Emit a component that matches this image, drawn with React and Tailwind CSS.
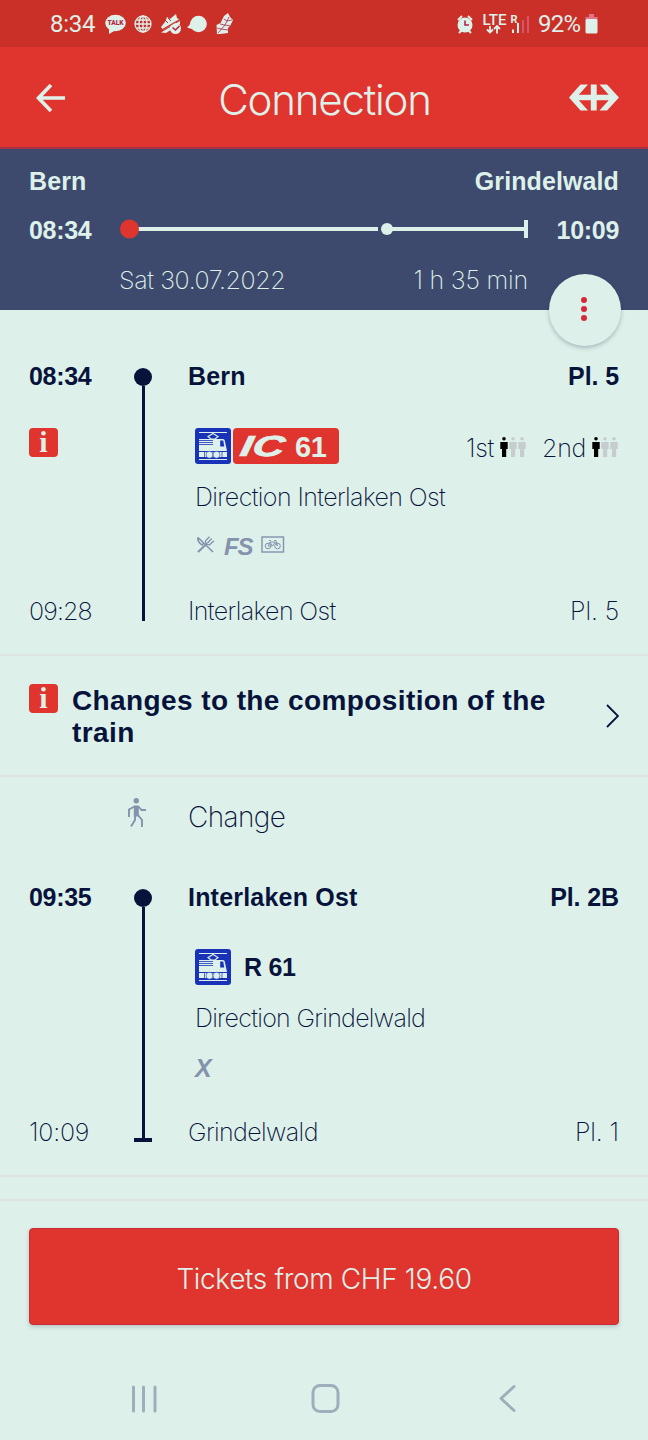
import clsx from "clsx";

const light = "font-['Inter','Liberation_Sans',sans-serif] font-[250]";
const regular = "font-['Inter','Liberation_Sans',sans-serif] font-light";
const bold = "font-['Liberation_Sans',Arial,sans-serif] font-bold";

function StatusBar() {
  return (
    <div className="h-[47px] bg-[#ca3028] text-[#ddf1ea] flex items-center justify-between pl-[50px] pr-[50px] font-['Roboto',sans-serif]">
      <div className="flex items-center">
        <span className="text-[24px] leading-none w-[55px] tracking-[-0.3px]">8:34</span>
        <svg width="21" height="20" viewBox="0 0 21 20" className="fill-current">
          <ellipse cx="10.5" cy="9" rx="10.3" ry="8.3" />
          <path d="M4 14v6l7-4z" />
          <text x="10.5" y="11.4" textAnchor="middle" fontSize="6.6" fontWeight="900" fill="#b32545">TALK</text>
        </svg>
        <svg width="18" height="18" viewBox="0 0 18 18" className="ml-2 fill-none stroke-current" strokeWidth="1.3">
          <circle cx="9" cy="9" r="8" />
          <ellipse cx="9" cy="9" rx="4" ry="8" />
          <path d="M9 1v16M1 9h16M2.5 5h13M2.5 13h13" />
        </svg>
        <svg width="22" height="20" viewBox="0 0 22 20" className="ml-2 fill-current">
          <path d="M1 13 5 8l2-5 3 2 6-5 1 4 3 2L3 16z" />
          <path d="M1 18.500 20 7v3L6 19z" />
          <circle cx="15.500" cy="14.500" r="5.500" />
          <path d="m12.500 13.500 3 2.500 4-4" fill="none" stroke="#b32545" strokeWidth="1.600" />
          <path d="M0 17 20 5.500" stroke="#ca3028" strokeWidth="1.300" />
          <path d="m5 6 3 3M8 4l3 3" stroke="#ca3028" strokeWidth="1" />
        </svg>
        <svg width="20" height="18" viewBox="0 0 20 18" className="ml-[5px] fill-current">
          <circle cx="11.5" cy="9" r="8.3" />
          <path d="M4 6Q3 11 0 12q2 2 8 2z" />
        </svg>
        <svg width="18" height="22" viewBox="0 0 18 22" className="ml-[9px] fill-current">
          <path d="m1 21-.500-9 4-2L8 3l4-3 2 4 3 3-3 6-2 2v5l-8 1z" />
          <path d="M2 20 9 12l4-8M9 12l-5-1M9 12l5 1M11 8l5-1M11 8 8 6M5 16l7 1M5 16l-4-1" fill="none" stroke="#b32545" strokeWidth="0.800" />
        </svg>
      </div>
      <div className="flex items-center">
        <svg width="18" height="20" viewBox="0 0 18 20" className="fill-current">
          <circle cx="9" cy="11" r="7.5" />
          <path d="m2 6 4-4M16 6l-4-4M3 19l3-3M15 19l-3-3" stroke="currentColor" strokeWidth="2" />
          <path d="M9 6.5V11h4" fill="none" stroke="#b32545" strokeWidth="1.6" />
        </svg>
        <svg width="48" height="22" viewBox="0 0 48 22" className="ml-2 fill-current overflow-visible">
          <text x="0.5" y="12" fontSize="15" fontWeight="500" textLength="24" lengthAdjust="spacingAndGlyphs">LTE</text>
          <path d="M8 13v6M5 16.5l3 3 3-3M15 20.500v-7M12 16l3-3 3 3" fill="none" stroke="currentColor" strokeWidth="1.8" />
          <text x="28.500" y="9.500" fontSize="11" fontWeight="700">R</text>
          <path d="M31 16.500v3.500M36 10v10" stroke="currentColor" strokeWidth="2" />
          <path d="M41 7v13M46 3v17" stroke="#d95468" strokeWidth="2" />
        </svg>
        <span className="ml-[8px] text-[24px] leading-none w-[47px] tracking-[-0.8px]">92%</span>
        <svg width="13" height="20" viewBox="0 0 13 20" className="fill-current">
          <path d="M4 0h5v3h3.500v3H.5V3H4z" fill="#e0748a" />
          <rect x="0.5" y="5" width="12" height="14.500" rx="1.500" />
        </svg>
      </div>
    </div>
  );
}

function Header() {
  return (
    <header className="h-[102px] bg-[#e0352e] border-b-2 border-[#a83243] text-[#ddf1ea] flex items-center justify-between pl-[36px] pr-[29px]">
      <svg width="30" height="28" viewBox="0 0 30 28" className="fill-none stroke-current mt-[2px]" strokeWidth="3.600">
        <path d="M15 1 2.500 14 15 27M2.500 14H29" />
      </svg>
      <h1 className={clsx(regular, "text-[42px] leading-none tracking-[-1.2px] mt-[6px] ml-[14px]")}>Connection</h1>
      <svg width="50" height="27" viewBox="0 0 50 27" className="fill-current mt-[1px]">
        <path d="M0 13.500 11.500.5H19L9.800 10.800H21.800V.5h5.900v10.300h12L30.500.5H38L50 13.500 38 26.500h-7.500l9.200-10.300h-12v10.300h-5.900V16.200H9.800L19 26.500h-7.500z" />
      </svg>
    </header>
  );
}

function Summary() {
  return (
    <section className="h-[161px] bg-[#3e4a6d] text-[#ddf1ea] px-[29px] pt-[18px] relative">
      <div className={clsx(bold, "flex justify-between text-[25px] leading-[28px] tracking-[0.1px]")}>
        <span>Bern</span>
        <span>Grindelwald</span>
      </div>
      <div className={clsx(bold, "flex items-center justify-between text-[25px] leading-[28px] tracking-[-0.3px] mt-[21px]")}>
        <span>08:34</span>
        <svg width="408" height="20" viewBox="0 0 408 20" className="-mt-[2px]">
          <path d="M10 10h248M267 10h139" stroke="#ddf1ea" strokeWidth="4" />
          <path d="M406 1v18" stroke="#ddf1ea" strokeWidth="4" />
          <circle cx="9.500" cy="10" r="9.500" fill="#e0352e" />
          <circle cx="267" cy="10" r="6" fill="#ddf1ea" />
        </svg>
        <span>10:09</span>
      </div>
      <div className={clsx(light, "flex justify-between text-[25px] leading-[28px] mt-[22px] pl-[90px] pr-[91px]")}>
        <span className="tracking-[-0.4px]">Sat 30.07.2022</span>
        <span className="tracking-[-0.2px]">1 h 35 min</span>
      </div>
      <button className="absolute right-[27px] top-[125px] size-[72px] rounded-full bg-[#ddf1ea] shadow-[0_2px_4px_rgba(20,20,60,0.25)] flex flex-col items-center justify-center gap-[3px] pr-[2px] pb-[2px]">
        <i className="size-[6px] rounded-full bg-[#d5293a]" />
        <i className="size-[6px] rounded-full bg-[#d5293a]" />
        <i className="size-[6px] rounded-full bg-[#d5293a]" />
      </button>
    </section>
  );
}

function InfoIcon() {
  return (
    <svg width="29" height="29" viewBox="0 0 29 29" className="shrink-0 overflow-visible font-['Liberation_Serif',serif] font-bold">
      <rect width="29" height="29" rx="4" fill="#e0352e" />
      <text x="14.500" y="24" textAnchor="middle" fontSize="30" letterSpacing="0" fill="#ddf1ea">i</text>
    </svg>
  );
}

function TrainIcon() {
  return (
    <svg width="36" height="36" viewBox="0 0 36 36" className="shrink-0">
      <rect width="36" height="36" rx="3" fill="#1832b8" />
      <g fill="#ddf1ea">
        <path d="M4 4h28v1H4z" />
        <path d="M4 11h24q1.500 0 1.800 1.500L32 23H4z" />
        <path d="M4 24h28v5H4zM4 31h28v1H4z" />
      </g>
      <path d="m18 5.500 5 3-3 2.500h-4l-3-2.500z" fill="none" stroke="#ddf1ea" strokeWidth="1.200" />
      <path d="M4 12.500h14M4 14.500h14M4 16.500h14" stroke="#1832b8" strokeWidth="0.800" />
      <path d="M25.200 12.500h3l1.100 6h-4.100z" fill="#1832b8" />
      <g fill="#ddf1ea" stroke="#1832b8" strokeWidth="0.600">
        <circle cx="14.500" cy="26.700" r="3.500" />
        <circle cx="21.500" cy="26.700" r="3.500" />
      </g>
      <path d="M9.500 24V29M27 24V29" stroke="#1832b8" strokeWidth="0.700" />
    </svg>
  );
}

function Occupancy() {
  return (
    <svg width="27" height="20" viewBox="0 0 27 20" className="-mt-px">
      {["#000000", "#c5cdce", "#c5cdce"].map((color, i) => (
        <g key={i} fill={color} transform={`translate(${i * 9} 0)`}>
          <circle cx="4" cy="1.800" r="1.800" />
          <path d="M.3 5h7.400v7H6.200v8H2v-8H.3z" />
        </g>
      ))}
    </svg>
  );
}

function CutleryIcon() {
  return (
    <svg width="18" height="17" viewBox="0 0 18 17" fill="none" stroke="#8592ad" strokeWidth="1.300">
      <path d="M1 1.500 16 16M1 1.500Q0 5 5 9l2-2" strokeWidth="1.600" />
      <path d="M1 16 10 7.500" strokeWidth="2" />
      <path d="m12.500.8-4 4q0 4 4 4l4.500-4M14.800 2.500 10.500 7" />
    </svg>
  );
}

function BikeIcon() {
  return (
    <svg width="24" height="17" viewBox="0 0 24 17" fill="none" stroke="#8592ad" strokeWidth="1">
      <rect x="1" y="1" width="21.500" height="15" strokeWidth="1.400" />
      <circle cx="7" cy="10" r="2.800" />
      <circle cx="16.500" cy="10" r="2.800" />
      <path d="m7 10 2-4h5l2.500 4M9 6l2.500 4L14 6M7 10h4.500M8 4.500h2M13 4.500h2L16.500 10" strokeWidth="0.900" />
    </svg>
  );
}

function WalkIcon() {
  return (
    <svg width="20" height="30" viewBox="0 0 20 30" fill="none" stroke="#8592ad" strokeWidth="1.900">
      <circle cx="9.300" cy="2.700" r="2.700" fill="#8592ad" stroke="none" />
      <path d="M6.800 7.500h5v11h-5z" fill="#8592ad" stroke="none" />
      <path d="M7.500 8.500 2 11.500V19M11.500 8.500l3 3.500H19M8 17v5l-4 6.500M11 17l4 5v7" />
    </svg>
  );
}

function Leg({ from, to, last, children, info }) {
  return (
    <div className="flex h-[264px] pl-[29px] pr-[29px]">
      <div className="w-[105px] flex flex-col text-[25px] leading-[28px]">
        <span className={clsx(bold, "tracking-[-0.3px]")}>{from.time}</span>
        {info && <div className="mt-[38px]"><InfoIcon /></div>}
        <span className={clsx(light, "mt-auto mb-px", last ? "tracking-[-0.2px]" : "tracking-[-0.9px]")}>{to.time}</span>
      </div>
      <div className="w-[18px] pt-[6px] pb-[5px] flex flex-col items-center">
        <div className="size-[18px] rounded-full bg-[#08133c]" />
        <div className="w-[3px] flex-1 bg-[#08133c]" />
        {last && <div className="h-[4px] w-[18px] bg-[#08133c]" />}
      </div>
      <div className="flex-1 pl-[36px] flex flex-col text-[25px] leading-[28px]">
        <div className={clsx(bold, "flex justify-between tracking-[0.2px]")}>
          <span>{from.name}</span>
          <span className="tracking-[-0.1px]">{from.platform}</span>
        </div>
        <div className="pl-[7px] mt-[38px]">{children}</div>
        <div className={clsx(light, "mt-auto mb-px flex justify-between tracking-[-0.6px]")}>
          <span>{to.name}</span>
          <span className="tracking-[-0.1px]">{to.platform}</span>
        </div>
      </div>
    </div>
  );
}

export default function App() {
  return (
    <div className="w-[648px] h-[1440px] overflow-hidden bg-[#ddf1ea] text-[#08133c]">
      <StatusBar />
      <Header />
      <Summary />

      <div className="h-[346px] pt-[52px] border-b-2 border-[#dde3e1]">
        <Leg
          info
          from={{ time: "08:34", name: "Bern", platform: "Pl. 5" }}
          to={{ time: "09:28", name: "Interlaken Ost", platform: "Pl. 5" }}
        >
          <div className="flex items-center">
            <TrainIcon />
            <svg width="106" height="36" viewBox="0 0 106 36" fill="#ddf1ea" className={clsx(bold, "ml-[2px] overflow-visible")}>
              <rect width="106" height="36" rx="4" fill="#e0352e" />
              <text x="11" y="28" fontSize="29" fontStyle="italic" letterSpacing="0" textLength="44" lengthAdjust="spacingAndGlyphs" transform="skewX(-10)" stroke="#ddf1ea" strokeWidth="0.700">IC</text>
              <text x="62" y="29" fontSize="29" letterSpacing="-0.500">61</text>
            </svg>
            <div className={clsx(light, "ml-auto mt-[3px] flex items-center tracking-[-0.3px]")}>
              <span className="mr-[6px]">1st</span>
              <Occupancy />
              <span className="ml-[15px] mr-[6px]">2nd</span>
              <Occupancy />
            </div>
          </div>
          <p className={clsx(light, "mt-[19px] tracking-[-0.6px]")}>Direction Interlaken Ost</p>
          <div className="mt-[21px] flex items-center h-[28px]">
            <div className="-mt-[3px] ml-[2px]"><CutleryIcon /></div>
            <span className={clsx(bold, "ml-[9px] mt-px w-[37px] text-[24px] italic tracking-[-1.2px] text-[#8592ad]")}>FS</span>
            <div className="-mt-[3px]"><BikeIcon /></div>
          </div>
        </Leg>
      </div>

      <div className="h-[121px] border-b-2 border-[#dde3e1] flex pl-[29px] pr-[29px] pt-[29px]">
        <div className="-mt-px"><InfoIcon /></div>
        <p className={clsx(bold, "ml-[14px] w-[500px] text-[28px] leading-[32px] tracking-[0.4px]")}>
          Changes to the composition of the train
        </p>
        <svg width="13" height="24" viewBox="0 0 13 24" fill="none" stroke="#08133c" strokeWidth="1.800" className="ml-auto mt-[19px]">
          <path d="m1 1 11 11L1 23" />
        </svg>
      </div>

      <div className="h-[106px] pl-[127px] pt-[21px] flex items-start">
        <WalkIcon />
        <span className={clsx(light, "ml-[41px] mt-[3px] text-[28px] leading-[32px] tracking-[-0.6px]")}>Change</span>
      </div>

      <div className="h-[294px] border-b-2 border-[#dde3e1]">
        <Leg
          last
          from={{ time: "09:35", name: "Interlaken Ost", platform: "Pl. 2B" }}
          to={{ time: "10:09", name: "Grindelwald", platform: "Pl. 1" }}
        >
          <div className="flex items-center">
            <TrainIcon />
            <span className={clsx(bold, "ml-[13px] tracking-[-0.3px]")}>R 61</span>
          </div>
          <p className={clsx(light, "mt-[19px] tracking-[-0.7px]")}>Direction Grindelwald</p>
          <p className={clsx(bold, "mt-[22px] italic text-[#8592ad]")}>X</p>
        </Leg>
      </div>

      <div className="h-[24px] border-b-2 border-[#dde3e1]" />

      <div className="px-[29px] pt-[27px]">
        <button className={clsx(regular, "block h-[97px] w-full rounded-[4px] border border-[#cb2b38] bg-[#e0352e] pt-[4px] text-[28px] tracking-[-0.350px] text-[#ddf1ea] shadow-[0_2px_4px_rgba(20,20,60,0.2)]")}>
          Tickets from CHF 19.60
        </button>
      </div>

      <nav className="flex h-[145px] pl-[131px] pt-[58px]">
        <svg width="27" height="32" viewBox="0 0 27 32" stroke="#9faebb" strokeWidth="3" strokeLinecap="round">
          <path d="M2.500 4v24M12.500 4v24M24 4v24" />
        </svg>
        <svg width="30" height="32" viewBox="0 0 30 32" fill="none" stroke="#9faebb" strokeWidth="3" className="ml-[153px]">
          <rect x="2" y="2.500" width="25" height="26" rx="7" />
        </svg>
        <svg width="17" height="32" viewBox="0 0 17 32" fill="none" stroke="#9faebb" strokeWidth="3" strokeLinecap="round" strokeLinejoin="round" className="ml-[158px]">
          <path d="M15 3.500 2 15.500l13 12" />
        </svg>
      </nav>
    </div>
  );
}
